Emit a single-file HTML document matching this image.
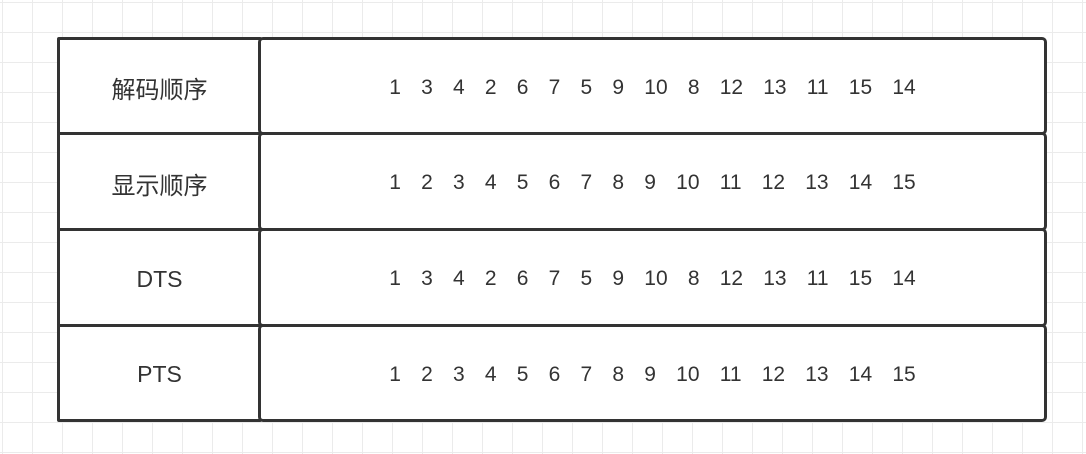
<!DOCTYPE html>
<html><head><meta charset="utf-8"><style>
html,body{margin:0;padding:0}
body{width:1086px;height:454px;position:relative;overflow:hidden;background-color:#fff;
background-image:linear-gradient(to right,#ebebeb 1px,transparent 1px),linear-gradient(to bottom,#ebebeb 1px,transparent 1px);
background-size:30px 30px;background-position:2px 2px;font-family:"Liberation Sans","Noto Sans CJK SC",sans-serif;color:#333}
.b{position:absolute;box-sizing:border-box;border:3px solid #333;background:#fff;display:flex;align-items:center;justify-content:center;padding-top:3px}
.l{left:57px;width:205px;border-radius:2px;font-size:24px}
.l.e{font-size:23px}
.r{left:258px;width:789px;border-radius:5px;gap:20.2px;font-size:21px}
</style></head><body>
<div class="b l" style="top:37px;height:98px">解码顺序</div>
<div class="b r" style="top:37px;height:98px"><span>1</span><span>3</span><span>4</span><span>2</span><span>6</span><span>7</span><span>5</span><span>9</span><span>10</span><span>8</span><span>12</span><span>13</span><span>11</span><span>15</span><span>14</span></div>
<div class="b l" style="top:132px;height:99px">显示顺序</div>
<div class="b r" style="top:132px;height:99px"><span>1</span><span>2</span><span>3</span><span>4</span><span>5</span><span>6</span><span>7</span><span>8</span><span>9</span><span>10</span><span>11</span><span>12</span><span>13</span><span>14</span><span>15</span></div>
<div class="b l e" style="top:228px;height:99px">DTS</div>
<div class="b r" style="top:228px;height:99px"><span>1</span><span>3</span><span>4</span><span>2</span><span>6</span><span>7</span><span>5</span><span>9</span><span>10</span><span>8</span><span>12</span><span>13</span><span>11</span><span>15</span><span>14</span></div>
<div class="b l e" style="top:324px;height:98px">PTS</div>
<div class="b r" style="top:324px;height:98px"><span>1</span><span>2</span><span>3</span><span>4</span><span>5</span><span>6</span><span>7</span><span>8</span><span>9</span><span>10</span><span>11</span><span>12</span><span>13</span><span>14</span><span>15</span></div>
</body></html>
